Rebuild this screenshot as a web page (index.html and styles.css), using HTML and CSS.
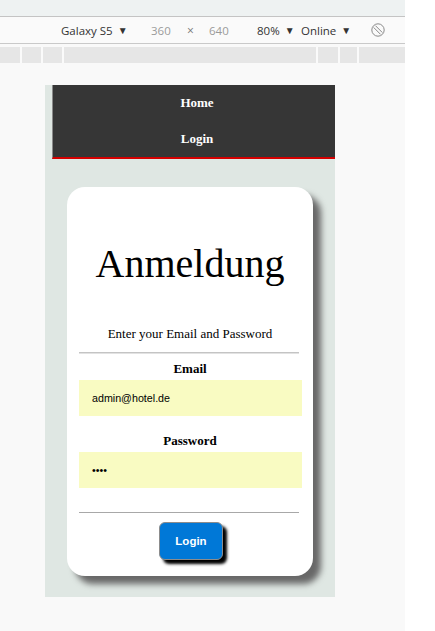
FILE: index.html
```html
<!DOCTYPE html>
<html lang="de">
<head>
<meta charset="utf-8">
<title>Anmeldung</title>
<link rel="stylesheet" href="styles.css">
</head>
<body>
<div class="devtools">
  <div class="topstrip"></div>
  <div class="toolbar">
    <span class="tb-device">Galaxy S5 <span class="caret">▼</span></span>
    <span class="tb-dim tb-w">360</span>
    <span class="tb-x">×</span>
    <span class="tb-dim tb-h">640</span>
    <span class="tb-zoom">80% <span class="caret">▼</span></span>
    <span class="tb-net">Online <span class="caret">▼</span></span>
    <svg class="tb-rotate" width="16" height="16" viewBox="0 0 16 16">
      <circle cx="8" cy="8" r="6.2" fill="none" stroke="#8a8a8a" stroke-width="1"/>
      <path d="M3.6 5.4 L10.6 12.4 M5.4 3.6 L12.4 10.6" stroke="#8a8a8a" stroke-width="1" fill="none"/>
    </svg>
  </div>
  <div class="ruler">
    <span class="seg s1"></span><span class="seg s2"></span><span class="seg s3"></span><span class="seg s4"></span><span class="seg s5"></span><span class="seg s6"></span><span class="seg s7"></span>
  </div>
  <div class="stage">
    <div class="device">
      <nav class="nav">
        <a class="nav-link">Home</a>
        <a class="nav-link">Login</a>
      </nav>
      <div class="card">
        <h1 class="title">Anmeldung</h1>
        <p class="subtitle">Enter your Email and Password</p>
        <div class="rule rule-light"></div>
        <label class="label">Email</label>
        <input class="field" type="text" value="admin@hotel.de" readonly>
        <label class="label label-pw">Password</label>
        <input class="field" type="password" value="1234" readonly>
        <div class="rule rule-dark"></div>
        <button class="btn" type="button">Login</button>
      </div>
    </div>
  </div>
</div>
</body>
</html>
```

FILE: styles.css
```css
html, body {
  margin: 0;
  padding: 0;
  background: #ffffff;
}
.devtools {
  width: 405px;
  height: 631px;
  background: #f9f9f9;
  display: flex;
  flex-direction: column;
}
.topstrip {
  height: 16px;
  background: #eef2f2;
  border-bottom: 1px solid #c4c4c4;
}
.toolbar {
  height: 26px;
  background: #fafafa;
  border-bottom: 1px solid #c9c9c9;
  display: flex;
  align-items: center;
  font-family: "Open Sans", "Noto Sans", sans-serif;
  font-size: 11.5px;
  color: #333;
  margin-bottom: 3px;
  white-space: nowrap;
}
.caret {
  font-size: 10px;
  position: relative;
  top: -1px;
  margin-left: 2px;
}
.tb-device { margin-left: 61px; width: 90px; }
.tb-dim { color: #9a9a9a; }
.tb-w { width: 36px; }
.tb-x { color: #777; width: 22px; font-size: 12px; }
.tb-h { width: 48px; }
.tb-zoom { width: 44px; }
.tb-net { width: 69px; }
.tb-rotate { display: block; }
.ruler {
  height: 16px;
  display: flex;
  background: #fafafa;
}
.seg {
  height: 16px;
  background: #e6e6e6;
  margin-right: 2px;
}
.s1 { width: 20px; }
.s2 { width: 19px; }
.s3 { width: 19px; }
.s4 { width: 253px; }
.s5 { width: 20px; }
.s6 { width: 17px; }
.s7 { width: 46px; margin-right: 0; }

.stage {
  flex: 1;
  padding: 22px 0 0 45px;
  background: #f9f9f9;
}
.device {
  width: 290px;
  height: 512px;
  background: #dfe7e3;
  overflow: hidden;
  display: flex;
  flex-direction: column;
  align-items: flex-start;
}
.nav {
  margin-left: 7px;
  width: 282px;
  height: 72px;
  background: #363636;
  border-left: 1px solid #8a8a8a;
  border-bottom: 2px solid #d40000;
  display: flex;
  flex-direction: column;
}
.nav-link {
  height: 36px;
  display: flex;
  align-items: center;
  justify-content: center;
  padding-left: 6px;
  color: #ffffff;
  font-family: "Liberation Serif", "Times New Roman", serif;
  font-weight: bold;
  font-size: 13px;
}
.card {
  margin: 28px 0 0 22px;
  width: 246px;
  height: 389px;
  box-sizing: border-box;
  background: #ffffff;
  border-radius: 18px;
  box-shadow: 8px 8px 6px #686868;
  padding: 53px 12px 0 12px;
  display: flex;
  flex-direction: column;
  align-items: stretch;
  font-family: "Liberation Serif", "Times New Roman", serif;
  color: #000;
}
.title {
  margin: 0;
  font-weight: normal;
  font-size: 40px;
  line-height: 48px;
  text-align: center;
}
.subtitle {
  margin: 38px 0 0 0;
  font-size: 13px;
  line-height: 16px;
  text-align: center;
}
.rule { height: 0; }
.rule-light {
  margin-top: 10px;
  border-top: 1px solid #c4c4c4;
  border-bottom: 1px solid #e2e2e2;
  margin-right: 2px;
}
.rule-dark {
  margin-top: 24px;
  border-top: 1px solid #a8a8a8;
  margin-right: 2px;
}
.label {
  display: block;
  margin-top: 7px;
  font-weight: bold;
  font-size: 13px;
  line-height: 16px;
  text-align: center;
}
.label-pw { margin-top: 17px; }
.field {
  display: block;
  margin-top: 3px;
  height: 36px;
  box-sizing: border-box;
  border: none;
  outline: none;
  background: #f9fbc2;
  padding: 0 13px;
  font-family: "Liberation Sans", Arial, sans-serif;
  font-size: 10.7px;
  color: #000;
  width: 223px;
}
.btn {
  align-self: center;
  margin: 9px 0 0 0;
  width: 64px;
  height: 38px;
  background: #0078d7;
  border: 1px solid #8c8c8c;
  border-radius: 6px;
  box-shadow: 4px 4px 3px #000;
  color: #ffffff;
  font-family: "Liberation Sans", Arial, sans-serif;
  font-weight: bold;
  font-size: 11.5px;
  padding: 0;
  position: relative;
  left: 1px;
}
```
